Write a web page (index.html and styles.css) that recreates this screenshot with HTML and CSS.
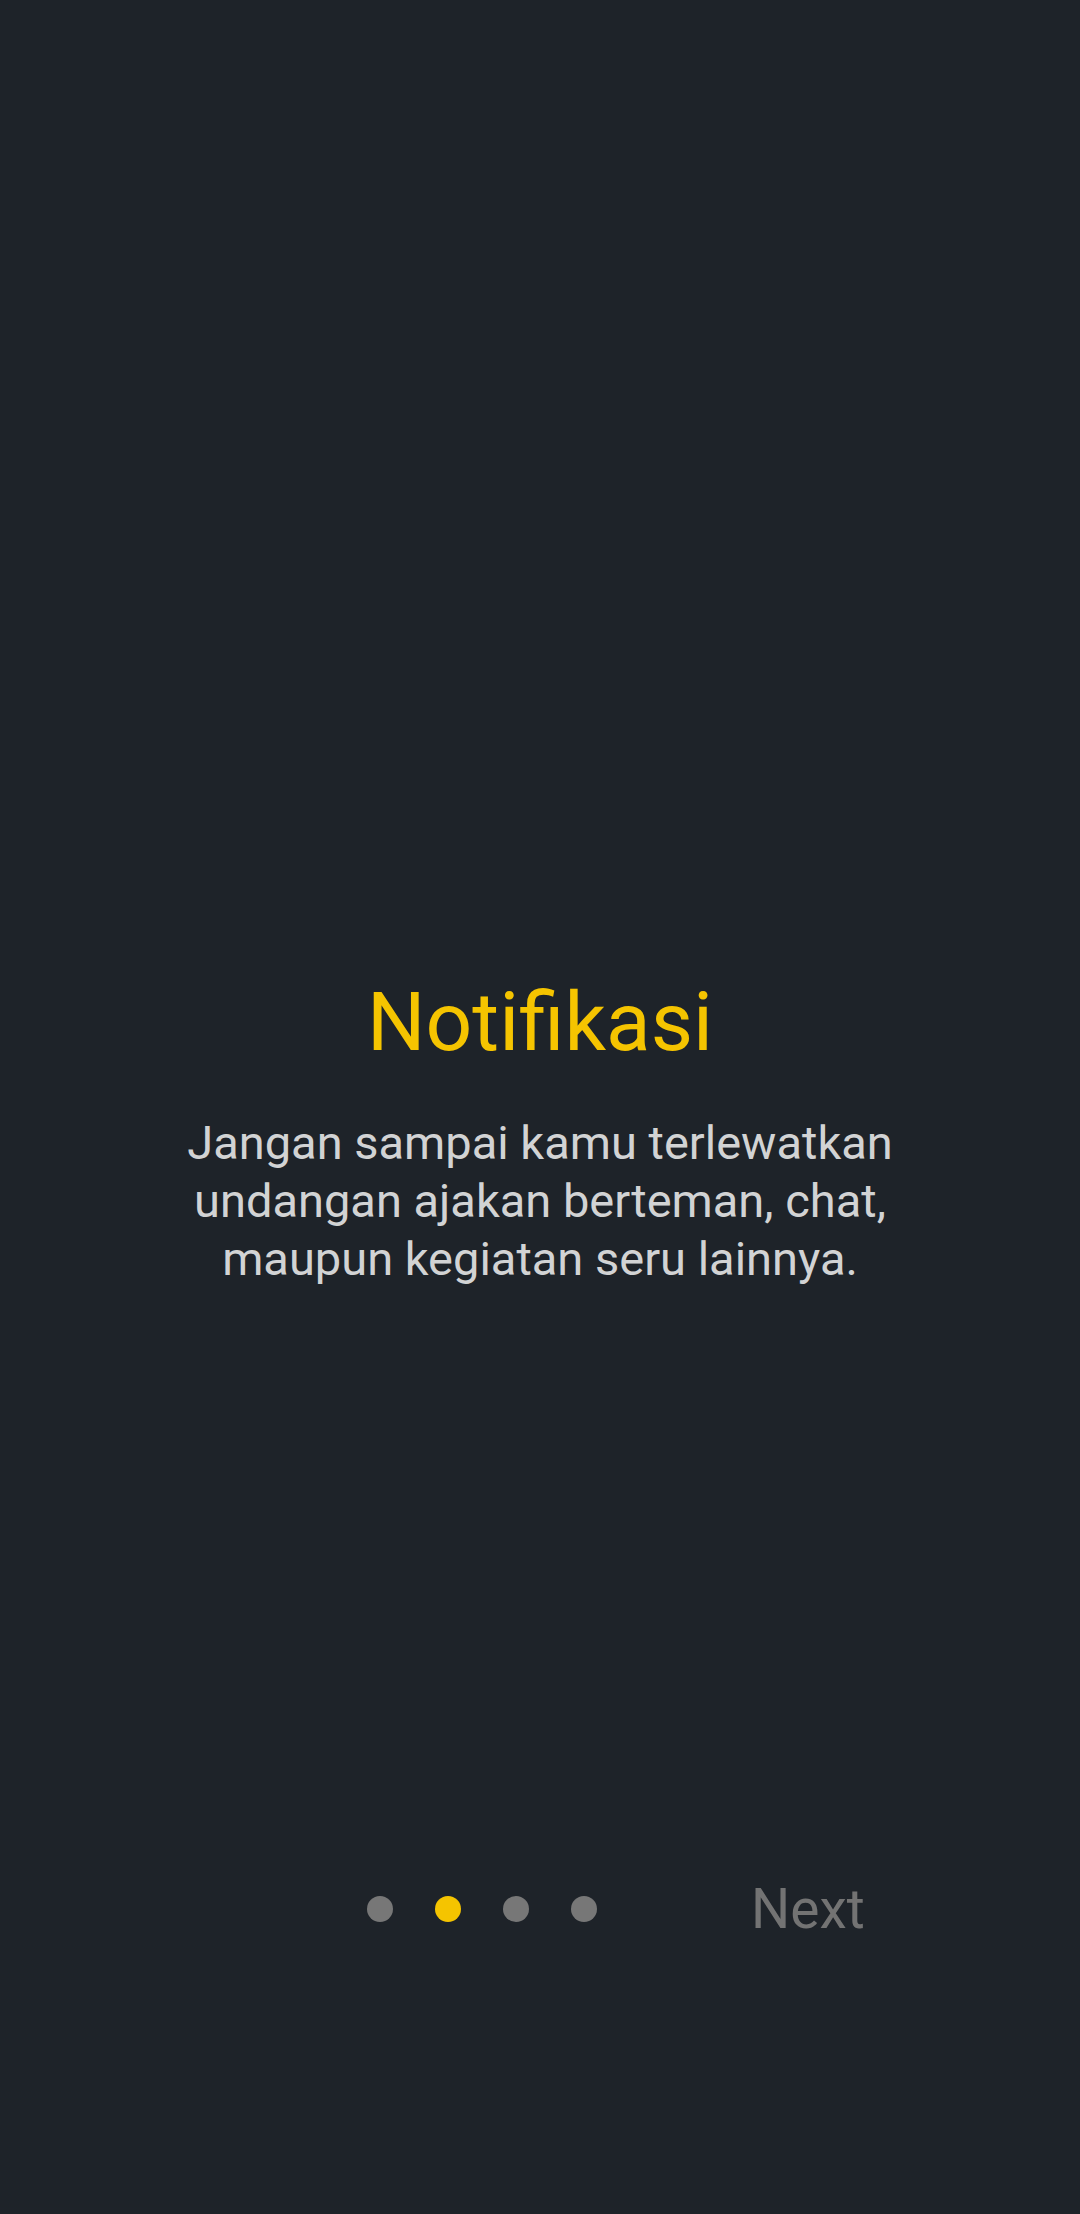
FILE: index.html
```html
<!DOCTYPE html>
<html lang="id">
<head>
<meta charset="utf-8">
<title>Notifikasi</title>
<link rel="stylesheet" href="styles.css">
</head>
<body>
<div class="screen">
  <section class="intro">
    <h1 class="title">Notifikasi</h1>
    <p class="desc">Jangan sampai kamu terlewatkan<br>undangan ajakan berteman, chat,<br>maupun kegiatan seru lainnya.</p>
  </section>
  <nav class="pager">
    <div class="dots">
      <span class="dot"></span>
      <span class="dot active"></span>
      <span class="dot"></span>
      <span class="dot"></span>
    </div>
    <span class="next">Next</span>
  </nav>
</div>
</body>
</html>
```

FILE: styles.css
```css
html, body {
  margin: 0;
  padding: 0;
  background: #1e2329;
}
.screen {
  width: 1080px;
  height: 2214px;
  background: #1e2329;
  font-family: Roboto, "Noto Sans", sans-serif;
  display: flex;
  flex-direction: column;
  overflow: hidden;
}
.intro {
  padding-top: 974px;
  display: flex;
  flex-direction: column;
  align-items: center;
  text-align: center;
}
.title {
  margin: 0;
  font-size: 82px;
  font-weight: 400;
  line-height: normal;
  color: #f5c400;
}
.desc {
  margin: 44px 0 0 0;
  font-size: 47px;
  line-height: 58px;
  color: #d2d3d4;
}
.pager {
  margin-top: 589px;
  display: flex;
  align-items: center;
  padding-left: 367px;
}
.dots {
  display: flex;
  gap: 42px;
}
.dot {
  width: 26px;
  height: 26px;
  border-radius: 50%;
  background: #777777;
}
.dot.active {
  background: #f5c400;
}
.next {
  margin-left: 154px;
  font-size: 55px;
  line-height: normal;
  color: #737373;
}
```
